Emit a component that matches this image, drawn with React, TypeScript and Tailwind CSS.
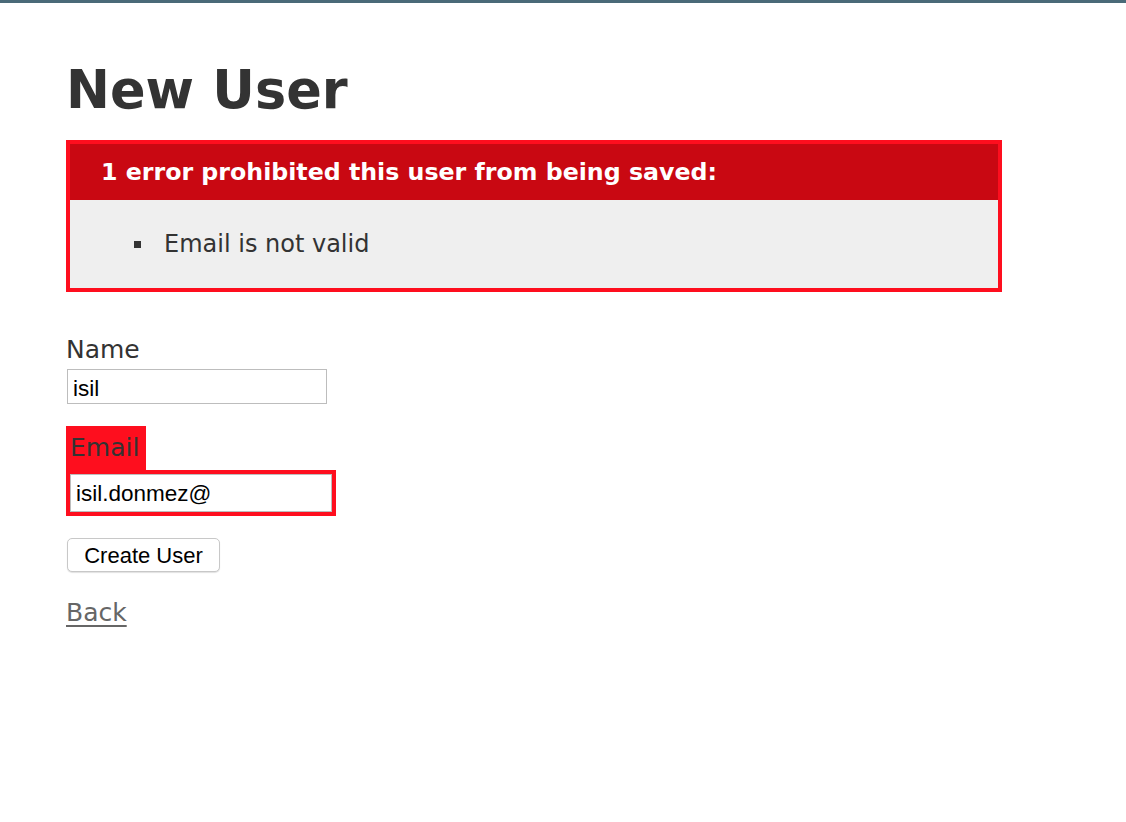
import React from "react";

export default function App() {
  return (
    <div className="min-h-[822px] bg-white font-['DejaVu_Sans',Verdana,sans-serif] text-[#333]">
      <div className="h-[3px] bg-[#4a6a78]" />
      <div className="px-[66px]">
        <h1 className="mt-[57px] text-[52.5px] leading-[60px] font-bold">New User</h1>
        <div className="mt-[20px] w-[936px] border-4 border-[#fe0e1e] bg-[#efefef]">
          <h2 className="bg-[#c90812] py-[10px] pl-[31px] text-[23.7px] leading-[36px] font-bold text-white">
            1 error prohibited this user from being saved:
          </h2>
          <ul className="py-[26px]">
            <li className="flex h-[36px] items-center text-[24px] leading-[36px]">
              <span className="ml-[64px] h-[7px] w-[7px] bg-[#333]" />
              <span className="ml-[23px]">Email is not valid</span>
            </li>
          </ul>
        </div>

        <div className="mt-[40px]">
          <label className="block text-[25px] leading-[36px]">Name</label>
          <input
            type="text"
            defaultValue="isil"
            className="ml-px mt-px block h-[35px] w-[260px] border border-[#bdbdbd] bg-white pl-[5px] pt-[4px] font-['Liberation_Sans',Arial,sans-serif] text-[22.5px] text-black outline-none"
          />
        </div>

        <div className="mt-[22px]">
          <div className="w-fit bg-[#fe0e1e] p-[4px]">
            <label className="block w-[72px] text-[25px] leading-[36px]">Email</label>
          </div>
          <div className="w-fit bg-[#fe0e1e] p-[4px]">
            <input
              type="text"
              defaultValue="isil.donmez@"
              className="block h-[38px] w-[262px] border border-[#bdbdbd] bg-white pl-[5px] pt-[2px] font-['Liberation_Sans',Arial,sans-serif] text-[22.5px] text-black outline-none"
            />
          </div>
        </div>

        <div className="mt-[22px]">
          <button className="ml-px flex h-[34px] w-[153px] items-center justify-center rounded-[5px] border border-[#c8c8c8] bg-white font-['Liberation_Sans',Arial,sans-serif] text-[22px] text-black shadow-[0_1px_1px_rgba(0,0,0,0.12)]">
            Create User
          </button>
        </div>

        <a
          href="#"
          className="mt-[23px] block w-fit text-[25px] leading-[36px] text-[#666] underline decoration-[2px] underline-offset-[4px]"
        >
          Back
        </a>
      </div>
    </div>
  );
}
